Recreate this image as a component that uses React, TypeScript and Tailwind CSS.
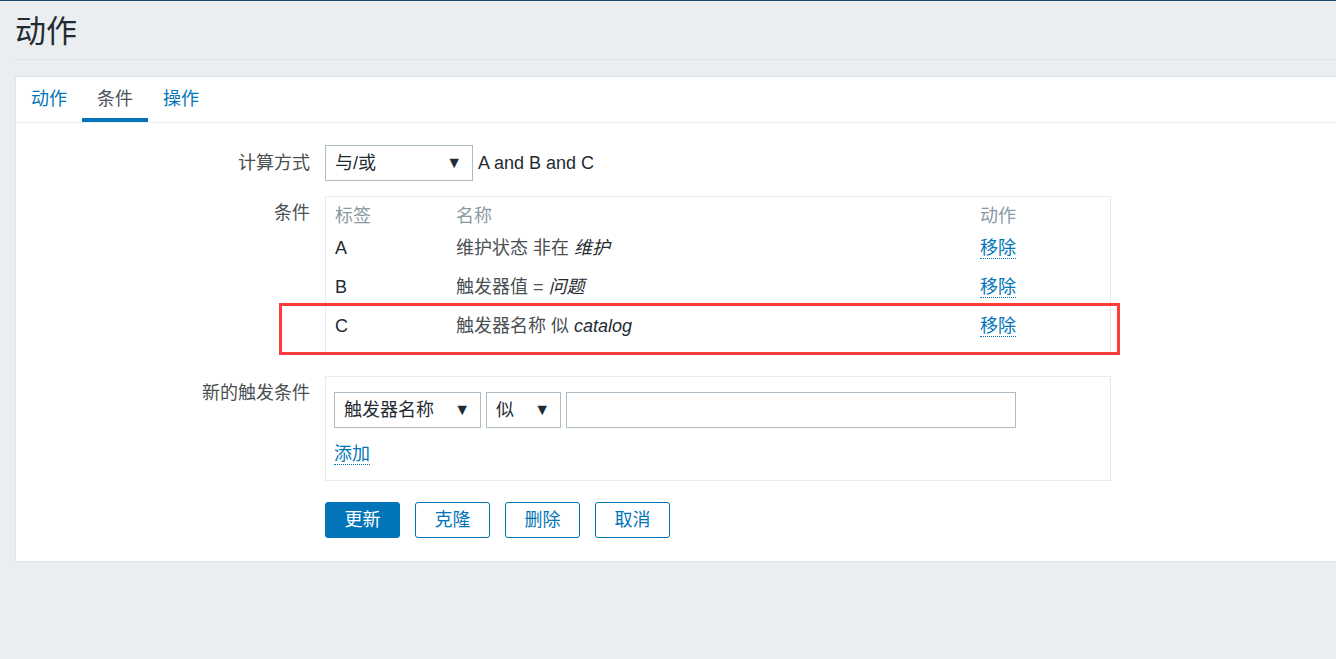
import React from "react";

const font = {
  fontFamily: '"Liberation Sans", "Noto Sans CJK SC", Arial, sans-serif',
};

function Select({ label, width }: { label: string; width: string }) {
  return (
    <div
      className={`flex items-center justify-between h-[36px] ${width} border border-[#acbbc4] bg-white pl-[9px] pr-[10px] text-[#1f2c33]`}
    >
      <span>{label}</span>
      <span className="text-[16px] leading-none">▼</span>
    </div>
  );
}

function RemoveLink() {
  return (
    <span className="text-[#0275b8] border-b border-dotted border-[#0275b8] leading-[21px]">
      移除
    </span>
  );
}

const conditions = [
  { tag: "A", name: "维护状态 非在 ", value: "维护" },
  { tag: "B", name: "触发器值 = ", value: "问题" },
  { tag: "C", name: "触发器名称 似 ", value: "catalog" },
];

export default function App() {
  return (
    <div
      style={font}
      className="min-h-screen bg-[#ebeef0] border-t border-[#1b4a6b] text-[18px] text-[#1f2c33]"
    >
      {/* header */}
      <div className="ml-[15px] h-[59px] border-b border-[#dfe4e7] pt-[13px]">
        <h1 className="text-[31px] leading-[36px] font-normal text-[#1f2c33]">
          动作
        </h1>
      </div>

      {/* panel */}
      <div className="ml-[15px] mt-[16px] bg-white border border-r-0 border-[#dfe4e7]">
        {/* tabs */}
        <div className="flex h-[46px] border-b border-[#ebeef0]">
          <div className="flex items-center px-[15px] pt-[4px] border-b-[4px] border-transparent text-[#0275b8]">
            动作
          </div>
          <div className="flex items-center px-[15px] pt-[4px] border-b-[4px] border-[#0275b8] text-[#4a5359]">
            条件
          </div>
          <div className="flex items-center px-[15px] pt-[4px] border-b-[4px] border-transparent text-[#0275b8]">
            操作
          </div>
        </div>

        {/* form */}
        <div className="pt-[22px] pb-[23px]">
          {/* calc type */}
          <div className="flex gap-[15px] items-center">
            <div className="w-[294px] text-right text-[#4a4f52]">计算方式</div>
            <div className="flex items-center">
              <Select label="与/或" width="w-[148px]" />
              <span className="ml-[5px] text-[#1f2c33]">A and B and C</span>
            </div>
          </div>

          {/* conditions */}
          <div className="flex gap-[15px] mt-[15px]">
            <div className="w-[294px] text-right pt-[6px] leading-[22px] text-[#4a4f52]">
              条件
            </div>
            <div className="relative w-[786px] border border-[#e8eaeb] px-[9px] pt-[7px] pb-[6px]">
              <div className="flex h-[25px] items-center text-[#8a9aa3]">
                <div className="w-[121px]">标签</div>
                <div className="w-[524px]">名称</div>
                <div>动作</div>
              </div>
              {conditions.map((c) => (
                <div key={c.tag} className="flex h-[39px] items-center">
                  <div className="w-[121px] text-[#1f2c33]">{c.tag}</div>
                  <div className="w-[524px] text-[#4a4f52]">
                    {c.name}
                    <i className="text-[#1f2c33]">{c.value}</i>
                  </div>
                  <div>
                    <RemoveLink />
                  </div>
                </div>
              ))}
              <div className="absolute left-[-47px] top-[106px] w-[841px] h-[52px] border-[3px] border-[#ff3b3b] pointer-events-none" />
            </div>
          </div>

          {/* new condition */}
          <div className="flex gap-[15px] mt-[23px]">
            <div className="w-[294px] text-right pt-[6px] leading-[22px] text-[#4a4f52]">
              新的触发条件
            </div>
            <div className="w-[786px] border border-[#e8eaeb] px-[8px] pt-[15px] pb-[16px]">
              <div className="flex gap-[5px]">
                <Select label="触发器名称" width="w-[147px]" />
                <Select label="似" width="w-[75px]" />
                <div className="h-[36px] w-[450px] border border-[#acbbc4] bg-white" />
              </div>
              <div className="mt-[16px] leading-[20px]">
                <span className="text-[#0275b8] border-b border-dotted border-[#0275b8]">
                  添加
                </span>
              </div>
            </div>
          </div>

          {/* buttons */}
          <div className="flex gap-[15px] mt-[21px] ml-[309px]">
            <button className="h-[36px] w-[75px] rounded-[3px] bg-[#0275b8] border border-[#0275b8] text-white">
              更新
            </button>
            <button className="h-[36px] w-[75px] rounded-[3px] bg-white border border-[#0275b8] text-[#0275b8]">
              克隆
            </button>
            <button className="h-[36px] w-[75px] rounded-[3px] bg-white border border-[#0275b8] text-[#0275b8]">
              删除
            </button>
            <button className="h-[36px] w-[75px] rounded-[3px] bg-white border border-[#0275b8] text-[#0275b8]">
              取消
            </button>
          </div>
        </div>
      </div>
    </div>
  );
}
